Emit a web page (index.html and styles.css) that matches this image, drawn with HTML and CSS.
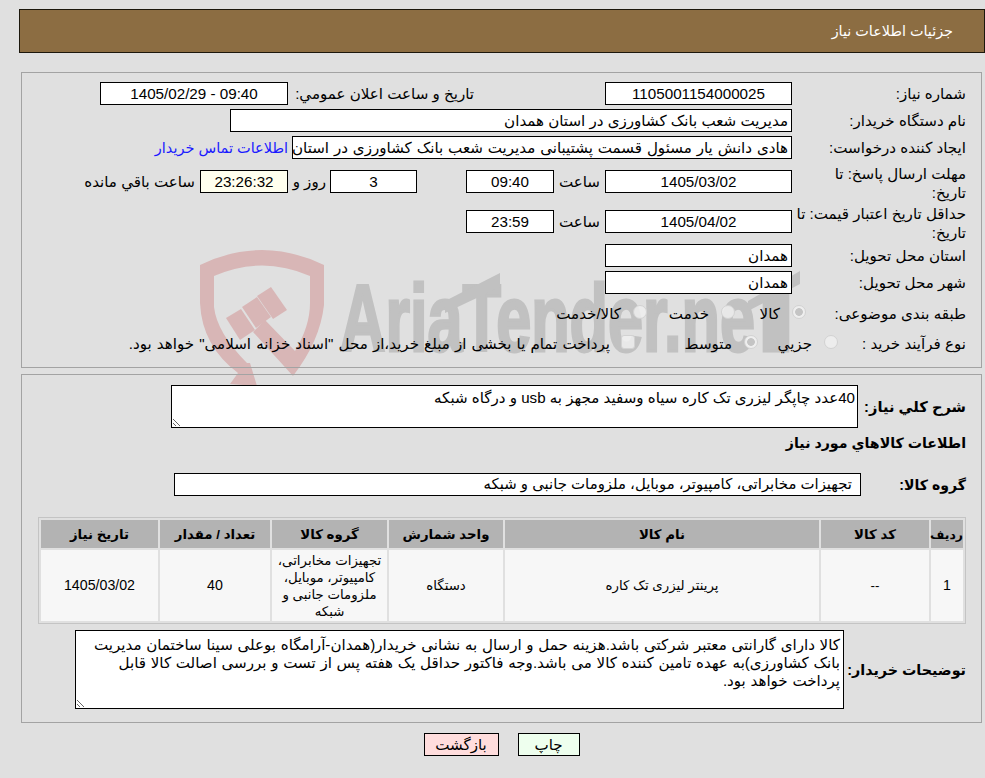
FILE: index.html
```html
<!DOCTYPE html>
<html lang="fa" dir="rtl">
<head>
<meta charset="utf-8">
<title>جزئیات اطلاعات نیاز</title>
<link rel="stylesheet" href="styles.css">
</head>
<body>
<header class="title-bar"><span>جزئیات اطلاعات نیاز</span></header>

<div class="watermark-host">
  <svg class="watermark" viewBox="0 0 640 170" width="640" height="170" aria-hidden="true">
    <g class="wm-shield">
      <path d="M10 24 Q72 -6 134 24 L134 64 Q130 100 103 135 L63 91 L75 79 L105 110 Q120 85 120 62 L120 35 Q72 14 24 35 L24 66 Q27 92 57 122 L60 122 L67 145 L40 143 L48 132 Q12 105 10 62 Z"/>
      <path d="M36 77 L51 68 L65 89 L50 99 Z"/>
      <path d="M52 66 L67 56 L81 76 L66 87 Z"/>
      <path d="M67 55 L81 46 L97 69 L83 78 Z"/>
    </g>
    <text class="wm-text" x="150" y="110" textLength="415" lengthAdjust="spacingAndGlyphs">AriaTender.ne</text>
    <text class="wm-text" x="565" y="110" textLength="42" lengthAdjust="spacingAndGlyphs">I</text>
    <path class="wm-bar" d="M558 60 L610 30 L610 43 L558 70 Z"/>
    <path class="wm-bar" d="M255 60 L310 32 L310 46 L255 72 Z"/>
  </svg>

  <section class="panel panel-top">
    <div class="row">
      <div class="label">شماره نیاز:</div>
      <div class="field w187 center ltr">1105001154000025</div>
      <div class="announce-label">تاریخ و ساعت اعلان عمومي:</div>
      <div class="field w188 center ltr">1405/02/29 - 09:40</div>
    </div>
    <div class="row">
      <div class="label">نام دستگاه خریدار:</div>
      <div class="field w562">مدیریت شعب بانک کشاورزی در استان همدان</div>
    </div>
    <div class="row">
      <div class="label">ایجاد کننده درخواست:</div>
      <div class="field w500">هادی دانش یار مسئول قسمت پشتیبانی مدیریت شعب بانک کشاورزی در استان همدان</div>
      <a class="contact" href="#">اطلاعات تماس خریدار</a>
    </div>
    <div class="row row-a">
      <div class="label label-wrap label-narrow">مهلت ارسال پاسخ: تا تاریخ:</div>
      <div class="field w187 center ltr">1405/03/02</div>
      <div class="hour">ساعت</div>
      <div class="field w88 center ltr">09:40</div>
      <div class="field w87 center ltr days">3</div>
      <div class="day-text">روز و</div>
      <div class="field w88 center ltr timer">23:26:32</div>
      <div class="left-text">ساعت باقي مانده</div>
    </div>
    <div class="row row-b">
      <div class="label label-wrap">حداقل تاریخ اعتبار قیمت: تا تاریخ:</div>
      <div class="field w187 center ltr">1405/04/02</div>
      <div class="hour">ساعت</div>
      <div class="field w88 center ltr">23:59</div>
    </div>
    <div class="row">
      <div class="label">استان محل تحویل:</div>
      <div class="field w187">همدان</div>
    </div>
    <div class="row">
      <div class="label">شهر محل تحویل:</div>
      <div class="field w187">همدان</div>
    </div>
    <div class="row row-choice row-subject">
      <div class="label">طبقه بندی موضوعی:</div>
      <span class="radio checked shift-a"></span><span class="opt w-57">کالا</span>
      <span class="radio"></span><span class="opt w-74">خدمت</span>
      <span class="radio"></span><span class="opt">کالا/خدمت</span>
    </div>
    <div class="row row-choice">
      <div class="label">نوع فرآیند خرید :</div>
      <span class="radio shift-b"></span><span class="opt w-66">جزیي</span>
      <span class="radio checked"></span><span class="opt w-109">متوسط</span>
      <span class="check"></span><span class="opt opt-long">پرداخت تمام یا بخشی از مبلغ خرید،از محل "اسناد خزانه اسلامی" خواهد بود.</span>
    </div>
  </section>

  <section class="panel panel-bottom">
    <div class="desc-row">
      <div class="bold-label">شرح کلي نیاز:</div>
      <textarea class="area area-desc" readonly>40عدد چاپگر لیزری تک کاره سیاه وسفید مجهز به usb و درگاه شبکه</textarea>
    </div>
    <h2 class="section-title">اطلاعات کالاهاي مورد نیاز</h2>
    <div class="group-row">
      <div class="bold-label">گروه کالا:</div>
      <div class="field group-field">تجهیزات مخابراتی، کامپیوتر، موبایل، ملزومات جانبی و شبکه</div>
    </div>
    <table class="items">
      <colgroup>
        <col class="c1"><col class="c2"><col class="c3"><col class="c4"><col class="c5"><col class="c6"><col class="c7">
      </colgroup>
      <thead>
        <tr><th class="th-narrow">ردیف</th><th>کد کالا</th><th>نام کالا</th><th>واحد شمارش</th><th>گروه کالا</th><th>تعداد / مقدار</th><th>تاریخ نیاز</th></tr>
      </thead>
      <tbody>
        <tr><td class="num">1</td><td>--</td><td>پرینتر لیزری تک کاره</td><td>دستگاه</td><td>تجهیزات مخابراتی، کامپیوتر، موبایل، ملزومات جانبی و شبکه</td><td class="num">40</td><td class="num">1405/03/02</td></tr>
      </tbody>
    </table>
    <div class="notes-row">
      <div class="bold-label">توضیحات خریدار:</div>
      <textarea class="area area-notes" readonly>کالا دارای گارانتی معتبر شرکتی باشد.هزینه حمل و ارسال به نشانی خریدار(همدان-آرامگاه بوعلی سینا ساختمان مدیریت بانک کشاورزی)به عهده تامین کننده کالا می باشد.وجه فاکتور حداقل یک هفته پس از تست و بررسی اصالت کالا قابل پرداخت خواهد بود.</textarea>
    </div>
  </section>
</div>

<div class="actions">
  <button class="btn btn-print" type="button">چاپ</button>
  <button class="btn btn-back" type="button">بازگشت</button>
</div>
</body>
</html>
```

FILE: styles.css
```css
* { box-sizing: border-box; }
html, body { margin: 0; padding: 0; }
body {
  background: #e0e0e0;
  color: #000;
  font-family: "Liberation Sans", "DejaVu Sans", sans-serif;
  font-size: 15.1px;
  height: 778px;
  overflow: hidden;
  padding-top: 9px;
}
.title-bar {
  width: 966px;
  margin-left: 19px;
  height: 44px;
  background: #8c6d42;
  border: 1px solid #1c170c;
  color: #fff;
  display: flex;
  align-items: center;
  padding-right: 31px;
  font-size: 14.4px;
}
.watermark-host { position: relative; margin-top: 19px; }
.watermark { position: absolute; left: 190px; top: 169px; z-index: 0; }
.wm-shield path { fill: #d8b6b6; }
.wm-text { font: bold 94px "Liberation Sans", sans-serif; fill: #c1c1c1; stroke: #c1c1c1; stroke-width: 3px; direction: ltr; unicode-bidi: bidi-override; }
.wm-bar { fill: #c1c1c1; }

.panel {
  position: relative;
  z-index: 1;
  border: 1px solid #a3a3a3;
  width: 961px;
  margin-right: 3px;
  padding-right: 15px;
}
.panel-top { height: 296px; padding-top: 9px; }
.panel-bottom { height: 349px; margin-top: 6px; padding-top: 10px; }

.row { display: flex; align-items: center; height: 23px; margin-bottom: 4px; }
.row-a { margin-top: 11px; margin-bottom: 17px; }
.row-b { margin-bottom: 11px; }
.label { width: 174px; flex: none; padding-left: 2px; }
.label-wrap { line-height: 19px; margin-top: 3px; padding-left: 0; }
.label-narrow { padding-left: 20px; }
.field {
  border: 1px solid #000;
  background: #fff;
  height: 23px;
  line-height: 21px;
  padding: 0 3px;
  flex: none;
  overflow: hidden;
  white-space: nowrap;
}
.center { text-align: center; }
.ltr { direction: ltr; font-size: 15.2px; }
.w187 { width: 187px; }
.w188 { width: 188px; }
.w88 { width: 88px; }
.w87 { width: 87px; }
.w562 { width: 562px; }
.w500 { width: 500px; word-spacing: 0.7px; }
.announce-label { width: 317px; flex: none; padding-right: 131px; white-space: nowrap; }
.contact { color: #1a1aff; text-decoration: none; margin-right: 4px; white-space: nowrap; font-size: 14.5px; }
.hour { width: 51px; flex: none; padding-right: 5px; }
.days { margin-right: 49px; }
.day-text { width: 42px; flex: none; padding-right: 4px; white-space: nowrap; }
.timer { background: #ffffee; }
.left-text { padding-right: 5px; white-space: nowrap; }

.row-choice { height: 26px; margin-bottom: 4px; }
.row-subject { margin-top: 7px; }
.radio, .check {
  display: inline-block;
  width: 14px;
  height: 14px;
  flex: none;
  background: rgba(238,238,238,.85);
  border: 1px solid #d2d2d2;
  border-radius: 50%;
  margin-top: -5px;
}
.radio.checked { background: radial-gradient(circle, #c4c4c4 0 3.5px, #eeeeee 4.2px); }
.check { border-radius: 3px; }
.shift-a { margin-right: -14px; }
.shift-b { margin-right: -46px; }
.opt { white-space: nowrap; padding-right: 12px; flex: none; }
.w-57 { width: 57px; }
.w-74 { width: 74px; }
.w-66 { width: 66px; }
.w-109 { width: 109px; }
.opt-long { word-spacing: 0.9px; padding-right: 11px; }

.desc-row, .group-row, .notes-row { display: flex; align-items: center; }
.bold-label { width: 108px; flex: none; font-weight: bold; font-size: 14.67px; white-space: nowrap; }
.area {
  display: block;
  border: 1px solid #000;
  background: #fff;
  font: inherit;
  color: #000;
  padding: 3px 2px 2px;
  margin: 0;
  line-height: 18px;
  outline: 0;
  overflow: hidden;
  direction: rtl;
}
.area-desc { width: 687px; height: 43px; }
.section-title { font-size: 14.2px; font-weight: bold; margin: 7px 0 21px; line-height: 17px; }
.group-field { width: 687px; padding-right: 8px; font-size: 14.9px; }
.group-row .bold-label { width: 105px; font-size: 14.1px; }
.items {
  border: 1px solid #c4c4c4;
  border-spacing: 2px;
  border-collapse: separate;
  table-layout: fixed;
  width: 927px;
  margin-top: 21px;
  font-size: 13.33px;
}
.c1 { width: 32px; } .c2 { width: 108px; } .c3 { width: 314px; } .c4 { width: 114px; }
.c5 { width: 115px; } .c6 { width: 110px; } .c7 { width: 117px; }
.items th { background: #b3b3b3; height: 28px; padding: 0; font-weight: bold; }
.items .th-narrow { font-size: 12.4px; }
.items td { background: #f7f7f7; height: 71px; padding: 0 2px; text-align: center; line-height: 17px; }
.items .num { font-size: 14.2px; }
.notes-row { margin-top: 6px; }
.notes-row .bold-label { width: 122px; font-size: 14.3px; }
.area-notes { width: 769px; height: 79px; padding: 5px 3px 2px; word-spacing: 0.5px; }

.actions { display: flex; justify-content: center; gap: 19px; margin: 10px 0 0 18px; }
.btn {
  border: 1px solid #000;
  height: 23px;
  padding: 0;
  font: inherit;
  color: #000;
}
.btn-print { background: #eeffee; width: 62px; }
.btn-back { background: #ffdddd; width: 75px; }
```
